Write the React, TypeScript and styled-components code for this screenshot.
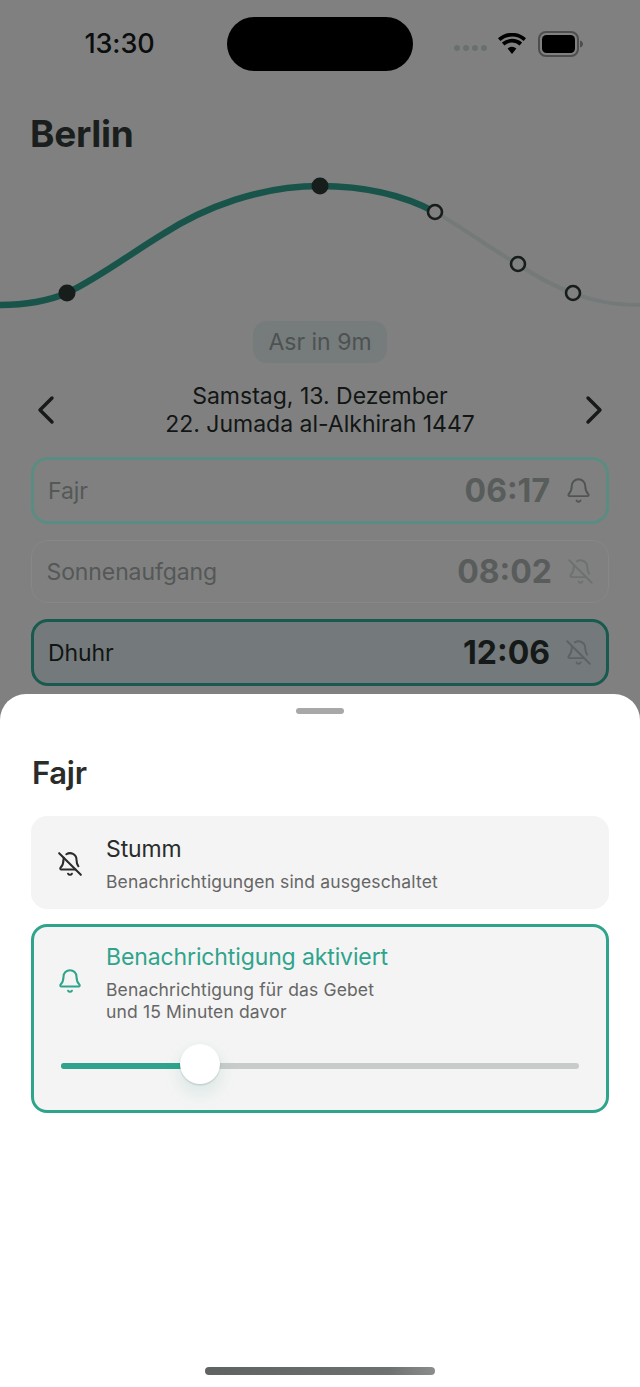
import { createGlobalStyle, styled } from 'styled-components'
import { Bell, BellOff, ChevronLeft, ChevronRight } from 'lucide-react'

const Global = createGlobalStyle`
  html, body { margin: 0; padding: 0; }
  body { font-family: Inter, "Liberation Sans", sans-serif; background: #808080; }
`

const Screen = styled.div`
  position: relative;
  width: 640px;
  height: 1387px;
  overflow: hidden;
  background: #808080;
`

const StatusBar = styled.div`
  display: flex;
  align-items: flex-start;
  height: 112px;
  box-sizing: border-box;
  padding-top: 17px;
`

const Time = styled.div`
  width: 227px;
  padding-top: 11px;
  text-align: center;
  padding-left: 12px;
  box-sizing: border-box;
  font-size: 27px;
  line-height: 32px;
  font-weight: 500;
  letter-spacing: -0.1px;
  color: #0c0e0e;
`

const Island = styled.div`
  width: 186px;
  height: 54px;
  border-radius: 27px;
  background: #000;
`

const StatusIcons = styled.div`
  display: flex;
  align-items: center;
  gap: 12px;
  margin-left: 41px;
  height: 54px;
`

const Signal = styled.div`
  display: flex;
  gap: 3px;
  margin: 8px -1px 0 0;
`

const SignalDot = styled.span`
  width: 6px;
  height: 6px;
  border-radius: 50%;
  background: #687070;
`

const Title = styled.h1`
  margin: 0;
  padding-left: 30px;
  font-size: 37px;
  line-height: 44px;
  font-weight: 700;
  letter-spacing: -0.3px;
  color: #1a1e1d;
`

const Curve = styled.svg`
  display: block;
  width: 640px;
  height: 165px;
`

const PillRow = styled.div`
  display: flex;
  justify-content: center;
`

const Pill = styled.div`
  height: 42px;
  padding: 0 15px;
  border-radius: 14px;
  background: #767b7c;
  color: #4d5251;
  font-size: 23px;
  line-height: 42px;
`

const DateNav = styled.div`
  display: flex;
  align-items: center;
  justify-content: space-between;
  padding: 19px 22px 0;
  height: 56px;
`

const DateText = styled.div`
  text-align: center;
  font-size: 23px;
  line-height: 28px;
  color: #121615;
`

const Rows = styled.div`
  display: flex;
  flex-direction: column;
  gap: 16px;
  padding: 19px 31px 0;
`

const Row = styled.div<{ $kind: 'faded' | 'plain' | 'current' }>`
  display: flex;
  align-items: center;
  box-sizing: border-box;
  height: ${p => (p.$kind === 'plain' ? '63px' : '67px')};
  padding: 0 14px 0 ${p => (p.$kind === 'plain' ? '14.5px' : '14px')};
  border-radius: 17px;
  border: ${p =>
    p.$kind === 'plain' ? '1.5px solid #848888' : p.$kind === 'faded' ? '3px solid #5a8c81' : '3px solid #185a4f'};
  background: ${p => (p.$kind === 'current' ? '#747a7b' : 'transparent')};
`

const RowName = styled.span<{ $strong?: boolean }>`
  flex: 1;
  font-size: 23px;
  letter-spacing: -0.1px;
  color: ${p => (p.$strong ? '#111514' : '#545857')};
`

const RowTime = styled.span<{ $strong?: boolean }>`
  font-size: 32px;
  font-weight: 700;
  margin-right: 15px;
  color: ${p => (p.$strong ? '#151918' : '#585c5b')};
`

const Sheet = styled.div`
  position: absolute;
  left: 0;
  right: 0;
  bottom: 0;
  height: 693px;
  box-sizing: border-box;
  padding: 14px 31px 0;
  border-radius: 26px 26px 0 0;
  background: #fff;
`

const Handle = styled.div`
  width: 48px;
  height: 6px;
  margin: 0 auto;
  border-radius: 3px;
  background: #a8a8a8;
`

const SheetTitle = styled.h2`
  margin: 39px 0 23px 1px;
  font-size: 31px;
  line-height: 40px;
  font-weight: 600;
  letter-spacing: -0.3px;
  color: #2a2c2c;
`

const Options = styled.div`
  display: flex;
  flex-direction: column;
  gap: 15px;
`

const Option = styled.div<{ $active?: boolean }>`
  box-sizing: border-box;
  height: ${p => (p.$active ? '189px' : '93px')};
  padding: ${p => (p.$active ? '15px 23px 0' : '18px 26px 0')};
  border-radius: 16px;
  background: #f4f4f4;
  border: ${p => (p.$active ? '3px solid #2fa48c' : 'none')};
`

const OptionHead = styled.div`
  display: flex;
  align-items: center;
`

const IconSlot = styled.div<{ $active?: boolean }>`
  display: flex;
  flex: none;
  justify-content: center;
  width: 26px;
  margin: 0 23px ${p => (p.$active ? '4px' : '0')} 0;
  color: ${p => (p.$active ? '#2fa48c' : '#2a2c2c')};
`

const OptionTitle = styled.div<{ $active?: boolean }>`
  font-size: 23px;
  line-height: 30px;
  letter-spacing: -0.12px;
  color: ${p => (p.$active ? '#2fa48c' : '#2a2c2c')};
`

const OptionText = styled.div`
  margin-top: 7px;
  font-size: 17.5px;
  line-height: 22px;
  letter-spacing: 0.15px;
  color: #666;
`

const Track = styled.div`
  position: relative;
  height: 6px;
  margin: 40px 4px 0;
  border-radius: 3px;
  background: #c8ccc9;
`

const TrackFill = styled.div`
  height: 100%;
  border-radius: 3px;
  background: #2fa38b;
`

const Thumb = styled.div`
  position: absolute;
  top: -19px;
  width: 40px;
  height: 40px;
  margin-left: -20px;
  border-radius: 50%;
  background: #fff;
  box-shadow: 0 8px 18px rgba(47, 164, 140, 0.15), 0 1px 2px rgba(0, 0, 0, 0.18);
`

const HomeBar = styled.div`
  position: absolute;
  left: 205px;
  bottom: 12px;
  width: 230px;
  height: 8px;
  border-radius: 4px;
  background: linear-gradient(90deg, #5f6362, #6d7170 80%, #8a8d8c);
`

const Wifi = () => (
  <svg width="28" height="22" viewBox="0 0 28 22">
    <path
      d="M14 21 9.6 15.6a7 7 0 0 1 8.8 0L14 21ZM6.4 12.4 3.9 9.6a15.4 15.4 0 0 1 20.2 0l-2.5 2.8a11.6 11.6 0 0 0-15.2 0ZM2.4 8 0 5.2a21 21 0 0 1 28 0L25.6 8a17.4 17.4 0 0 0-23.2 0Z"
      fill="#000"
    />
  </svg>
)

const Battery = () => (
  <svg width="46" height="26" viewBox="0 0 46 26">
    <rect x="1" y="1" width="39" height="24" rx="7" fill="none" stroke="#4e4e4e" strokeWidth="2" />
    <rect x="4" y="4" width="33" height="18" rx="4.5" fill="#000" />
    <path d="M42 9.5c2 .5 3 2 3 3.5s-1 3-3 3.5Z" fill="#4e4e4e" />
  </svg>
)

const passedDots = [
  [67, 293],
  [320, 186],
]
const comingDots = [
  [435, 212],
  [518, 264],
  [573, 293],
]

const SLIDER_WIDTH = 518
const sliderValue = 139

export default function App() {
  return (
    <Screen>
      <Global />
      <StatusBar>
        <Time>13:30</Time>
        <Island />
        <StatusIcons>
          <Signal>
            <SignalDot />
            <SignalDot />
            <SignalDot />
            <SignalDot />
          </Signal>
          <Wifi />
          <Battery />
        </StatusIcons>
      </StatusBar>
      <Title>Berlin</Title>
      <Curve viewBox="0 156 640 165">
        <path
          d="M435 212C470 232 495 252 518 264C538 278 553 286 573 293C595 302 615 305 640 305"
          fill="none"
          stroke="#737a79"
          strokeWidth="4"
        />
        <path
          d="M0 305C25 305 48 301 67 293C100 277 130 254 163 234C205 207 260 186 320 186C365 186 403 195 435 212"
          fill="none"
          stroke="#18544a"
          strokeWidth="6.5"
        />
        {passedDots.map(([x, y]) => (
          <circle key={x} cx={x} cy={y} r="8.5" fill="#161d1b" />
        ))}
        {comingDots.map(([x, y]) => (
          <circle key={x} cx={x} cy={y} r="7" fill="#808080" stroke="#161d1b" strokeWidth="2.6" />
        ))}
      </Curve>
      <PillRow>
        <Pill>Asr in 9m</Pill>
      </PillRow>
      <DateNav>
        <ChevronLeft size={48} strokeWidth={1.7} color="#161a19" />
        <DateText>
          Samstag, 13. Dezember
          <br />
          22. Jumada al-Alkhirah 1447
        </DateText>
        <ChevronRight size={48} strokeWidth={1.7} color="#161a19" />
      </DateNav>
      <Rows>
        <Row $kind="faded">
          <RowName>Fajr</RowName>
          <RowTime>06:17</RowTime>
          <Bell size={27} strokeWidth={1.7} color="#505554" />
        </Row>
        <Row $kind="plain">
          <RowName>Sonnenaufgang</RowName>
          <RowTime>08:02</RowTime>
          <BellOff size={27} strokeWidth={1.7} color="#6d7271" />
        </Row>
        <Row $kind="current">
          <RowName $strong>Dhuhr</RowName>
          <RowTime $strong>12:06</RowTime>
          <BellOff size={27} strokeWidth={1.7} color="#5c6362" />
        </Row>
      </Rows>
      <Sheet>
        <Handle />
        <SheetTitle>Fajr</SheetTitle>
        <Options>
          <Option>
            <OptionHead>
              <IconSlot>
                <BellOff size={26} strokeWidth={1.9} />
              </IconSlot>
              <div>
                <OptionTitle>Stumm</OptionTitle>
                <OptionText>Benachrichtigungen sind ausgeschaltet</OptionText>
              </div>
            </OptionHead>
          </Option>
          <Option $active>
            <OptionHead>
              <IconSlot $active>
                <Bell size={26} strokeWidth={1.9} />
              </IconSlot>
              <div>
                <OptionTitle $active>Benachrichtigung aktiviert</OptionTitle>
                <OptionText>
                  Benachrichtigung für das Gebet
                  <br />
                  und 15 Minuten davor
                </OptionText>
              </div>
            </OptionHead>
            <Track>
              <TrackFill style={{ width: (sliderValue / SLIDER_WIDTH) * 100 + '%' }} />
              <Thumb style={{ left: (sliderValue / SLIDER_WIDTH) * 100 + '%' }} />
            </Track>
          </Option>
        </Options>
      </Sheet>
      <HomeBar />
    </Screen>
  )
}
